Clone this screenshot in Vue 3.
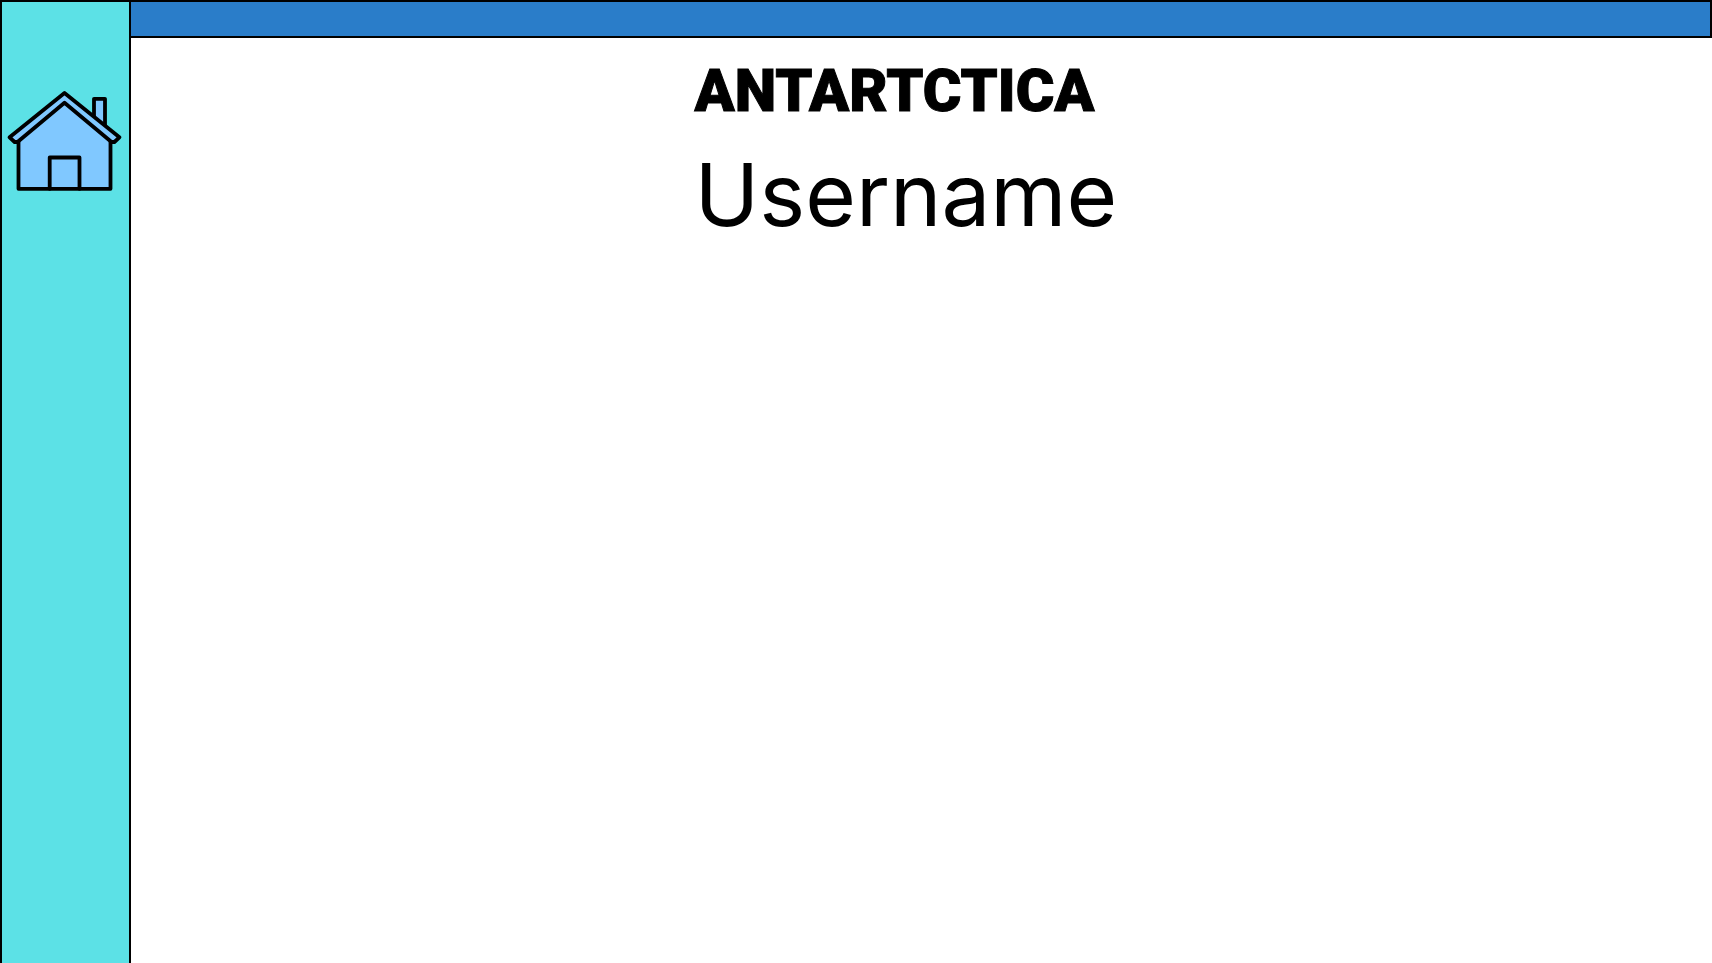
<script setup>
const title = 'ANTARTCTICA'
const username = 'Username'
</script>

<template>
  <div class="layout">
    <nav class="sidebar" aria-label="Main">
      <a class="home" href="#" aria-label="Home">
        <svg viewBox="7 11 117 100" width="117" height="100" aria-hidden="true">
          <g fill="#80c8ff" stroke="#000" stroke-width="3.8" stroke-linejoin="round" stroke-linecap="round">
            <path d="M94 40V18.8H105V50Z" />
            <path d="M18.5 58V108.8H110.5V58L64.5 20Z" />
            <path d="M64.5 13L119.4 57.3L114.4 62H111.5L64.5 22.8L17.5 62H14.6L9.6 57.3Z" />
            <path d="M49.7 108.8V77.5H79.5V108.8" fill="none" />
          </g>
        </svg>
      </a>
    </nav>
    <header class="topbar"></header>
    <main class="content">
      <div class="profile">
        <h1 class="title">{{ title }}</h1>
        <p class="username">{{ username }}</p>
      </div>
    </main>
  </div>
</template>

<style>
body {
  margin: 0;
  background: #fff;
}
</style>

<style scoped>
.layout {
  display: grid;
  grid-template-columns: 131px 1fr;
  grid-template-rows: 38px 1fr;
  min-height: 100vh;
  color: #000;
}

.sidebar {
  grid-row: 1 / 3;
  box-sizing: border-box;
  padding-top: 89px;
  border: 2px solid #000;
  border-bottom: 0;
  background: #5ce1e6;
  text-align: center;
}

.home {
  display: inline-block;
}

.home svg {
  display: block;
}

.topbar {
  border: 2px solid #000;
  border-left: 0;
  background: #2a7dc9;
}

.content {
  display: flex;
  justify-content: center;
  padding-top: 17px;
}

.profile {
  width: 454px;
}

.title {
  margin: 0;
  font: 900 59px/72px Roboto, sans-serif;
  -webkit-text-stroke: 1px #000;
  white-space: nowrap;
}

.username {
  margin: 16px 0 0;
  font: 400 87px/104px Inter, sans-serif;
}
</style>
